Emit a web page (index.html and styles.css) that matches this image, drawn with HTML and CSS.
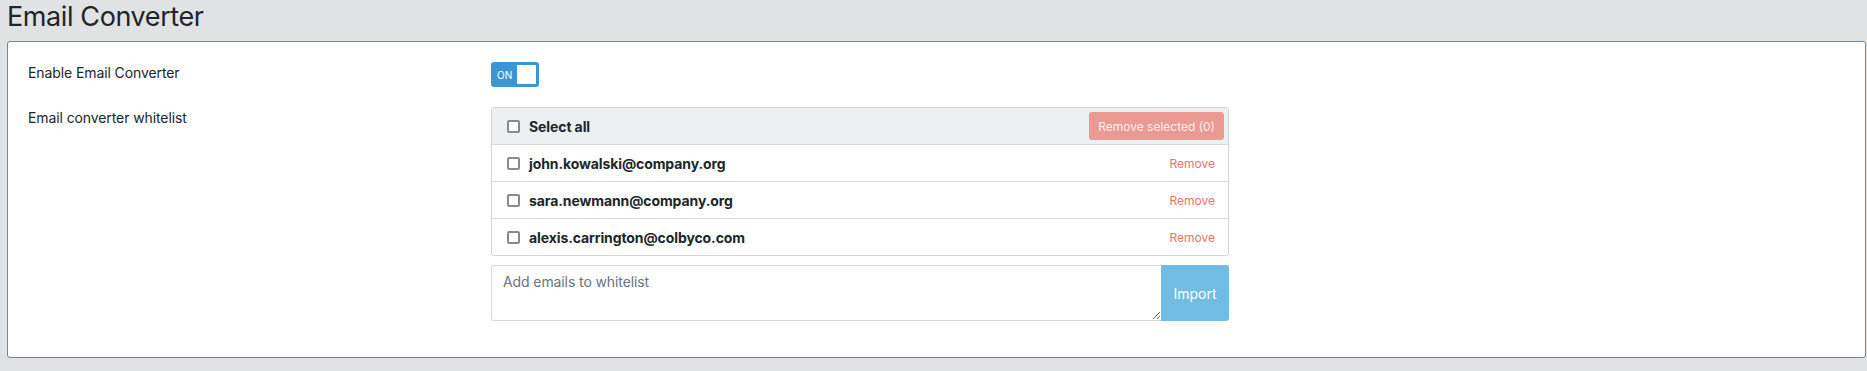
FILE: index.html
```html
<!DOCTYPE html>
<html lang="en">
<head>
  <meta charset="UTF-8" />
  <meta name="viewport" content="width=device-width, initial-scale=1.0"/>
  <title>Email Converter</title>
  <link rel="stylesheet" href="styles.css">
</head>
<body>

  <h1 class="page-title">Email Converter</h1>

  <div class="panel">
    <div class="form-row">
      <label class="form-label">Enable Email Converter</label>
      <div class="form-control">
        <div class="toggle">
          <span class="toggle-text">ON</span>
          <span class="toggle-knob"></span>
        </div>
      </div>
    </div>

    <div class="form-row">
      <label class="form-label">Email converter whitelist</label>
      <div class="form-control">
        <div class="whitelist">
          <div class="whitelist-head">
            <label class="item-check">
              <span class="checkbox"></span>
              <span class="item-name">Select all</span>
            </label>
            <button class="remove-selected" disabled>Remove selected (0)</button>
          </div>
          <div class="whitelist-row">
            <label class="item-check">
              <span class="checkbox"></span>
              <span class="item-name">john.kowalski@company.org</span>
            </label>
            <a href="#" class="remove-link">Remove</a>
          </div>
          <div class="whitelist-row">
            <label class="item-check">
              <span class="checkbox"></span>
              <span class="item-name">sara.newmann@company.org</span>
            </label>
            <a href="#" class="remove-link">Remove</a>
          </div>
          <div class="whitelist-row">
            <label class="item-check">
              <span class="checkbox"></span>
              <span class="item-name">alexis.carrington@colbyco.com</span>
            </label>
            <a href="#" class="remove-link">Remove</a>
          </div>
        </div>

        <div class="import-group">
          <textarea class="import-input" placeholder="Add emails to whitelist"></textarea>
          <button class="import-button">Import</button>
        </div>
      </div>
    </div>
  </div>

</body>
</html>
```

FILE: styles.css
```css
* {
  box-sizing: border-box;
}

body {
  margin: 0;
  padding: 0 1px 0 7px;
  background-color: #e1e2e4;
  color: #212529;
  font-family: Inter, "Noto Sans", Arial, sans-serif;
  font-size: 14px;
  line-height: 21px;
  letter-spacing: -0.1px;
}

.page-title {
  margin: 0 0 7px 0;
  font-size: 27px;
  font-weight: 400;
  line-height: 34px;
  letter-spacing: -0.4px;
  color: #212529;
}

.panel {
  background-color: #ffffff;
  border: 1px solid #3f95d4;
  border-radius: 3px;
  padding: 20px 20px 35px 20px;
  height: 317px;
}

.form-row {
  display: grid;
  grid-template-columns: 463px 738px;
  margin-bottom: 20px;
}

.form-row:last-child {
  margin-bottom: 0;
}

.form-label {
  color: #212529;
}

.toggle {
  display: flex;
  align-items: center;
  justify-content: space-between;
  width: 48px;
  height: 25px;
  padding: 3px;
  background-color: #3a97d3;
  border-radius: 3px;
}

.toggle-text {
  color: #ffffff;
  font-size: 10px;
  line-height: 1;
  padding-left: 3px;
  letter-spacing: 0;
}

.toggle-knob {
  width: 19px;
  height: 19px;
  background-color: #ffffff;
  border-radius: 1px;
}

.whitelist {
  border: 1px solid #d3d5d8;
  border-radius: 3px;
}

.whitelist-head,
.whitelist-row {
  display: flex;
  align-items: center;
  justify-content: space-between;
  height: 37px;
  padding: 0 13px 0 15px;
  border-top: 1px solid #d9dadd;
}

.whitelist-head {
  height: 36px;
  border-top: none;
  background-color: #edf0f3;
  padding-right: 4px;
}

.item-check {
  display: flex;
  align-items: center;
  gap: 9px;
}

.checkbox {
  width: 13px;
  height: 13px;
  border: 2px solid #8a8896;
  border-radius: 2px;
  background-color: #ffffff;
}

.item-name {
  font-weight: 700;
  color: #212529;
}

.remove-selected {
  height: 28px;
  padding: 0 9px;
  border: none;
  border-radius: 3px;
  background-color: #ea9a93;
  color: #fbefed;
  font-family: inherit;
  font-size: 12px;
  letter-spacing: 0;
}

.remove-link {
  color: #e9736d;
  font-size: 12px;
  letter-spacing: 0;
  text-decoration: none;
}

.import-group {
  display: flex;
  margin-top: 9px;
  height: 56px;
}

.import-input {
  flex: 1;
  height: 56px;
  padding: 5px 11px;
  border: 1px solid #d9dadd;
  border-right: none;
  border-radius: 3px 0 0 3px;
  font-family: inherit;
  font-size: 14px;
  line-height: 21px;
  letter-spacing: -0.1px;
  resize: vertical;
}

.import-input::placeholder {
  color: #6b7280;
}

.import-button {
  width: 68px;
  border: none;
  border-radius: 0 3px 3px 0;
  background-color: #72bce2;
  color: #ffffff;
  font-family: inherit;
  font-size: 14px;
}
```
